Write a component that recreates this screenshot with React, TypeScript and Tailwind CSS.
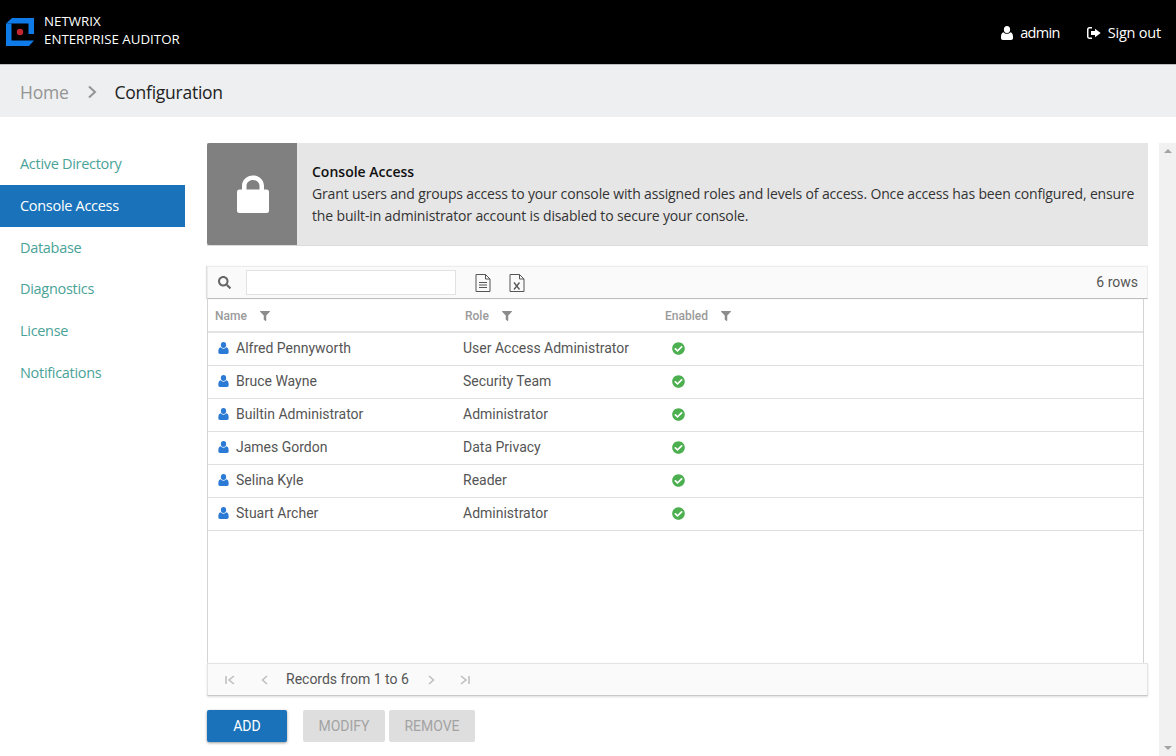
import { FaCheckCircle, FaFilter, FaSearch } from "react-icons/fa"

const segoe = "font-['Open_Sans',sans-serif]"

const navItems = ["Active Directory", "Console Access", "Database", "Diagnostics", "License", "Notifications"]

const rows = [
  { name: "Alfred Pennyworth", role: "User Access Administrator" },
  { name: "Bruce Wayne", role: "Security Team" },
  { name: "Builtin Administrator", role: "Administrator" },
  { name: "James Gordon", role: "Data Privacy" },
  { name: "Selina Kyle", role: "Reader" },
  { name: "Stuart Archer", role: "Administrator" },
]

function Logo() {
  return (
    <svg width="28" height="28" viewBox="0 0 28 28" className="shrink-0">
      <path d="M0 5.500 6 0H28V16H22.500V5.500H0Z" fill="#0f7be8" />
      <path d="M0 5.500H5.500V22.500H28L23 28H0Z" fill="#0f7be8" />
      <circle cx="14" cy="14" r="3.200" fill="#c4262e" />
    </svg>
  )
}

function UserIcon({ className }: { className?: string }) {
  return (
    <svg viewBox="0 0 12 14" className={className} fill="currentColor">
      <ellipse cx="6" cy="3.600" rx="3.100" ry="3.500" />
      <path d="M2.600 6.200C3.400 7.200 4.600 7.800 6 7.800s2.600-.6 3.400-1.600c1.700.3 2.600 1.900 2.600 4.600v1.200c0 1.200-.8 2-1.900 2H1.900C.8 14 0 13.200 0 12v-1.200c0-2.700.9-4.300 2.600-4.600z" />
    </svg>
  )
}

function SignOutIcon() {
  return (
    <svg viewBox="0 0 14 12" className="h-[12px] w-[14px]" fill="currentColor">
      <path d="M5 0v1.500H2.500c-.6 0-1 .4-1 1v7c0 .6.400 1 1 1H5V12H2.500C1.100 12 0 10.900 0 9.500v-7C0 1.100 1.100 0 2.500 0z" />
      <path d="M8 1.800 13.700 6 8 10.200V8H4V4h4z" />
    </svg>
  )
}

function LockIcon() {
  return (
    <svg viewBox="0 0 32 38" className="ml-[2px] h-[38px] w-[32px]" fill="white">
      <path d="M5 15V11C5 5 10 .5 16 .5S27 5 27 11v4h-4.500v-4c0-3.500-3-6-6.500-6s-6.500 2.500-6.500 6v4z" />
      <rect x="0" y="14.500" width="32" height="23.500" rx="2.500" />
    </svg>
  )
}

function FileIcon({ x }: { x?: boolean }) {
  return (
    <svg viewBox="0 0 16 18" className="h-[18px] w-[16px]" fill="none" stroke="#555" strokeWidth="1">
      <path d="M1 .5H10.500L15 5V17.500H1Z" />
      <path d="M10.500 .5V5H15" />
      {x ? (
        <path d="M5 8.500 10.500 15.500M10.500 8.500 5 15.500" strokeWidth="1.300" />
      ) : (
        <path d="M4 8.500H12M4 11H12M4 13.500H12" />
      )}
    </svg>
  )
}

function PagerIcon({ d }: { d: string }) {
  return (
    <svg viewBox="0 0 12 12" className="h-[12px] w-[12px]" fill="none" stroke="#bdbdbd" strokeWidth="1.500">
      <path d={d} />
    </svg>
  )
}

function HeaderCell({ label, className }: { label: string; className: string }) {
  return (
    <div className={`flex items-center pt-[1px] ${className}`}>
      <span className="text-[12px] font-medium text-[#9a9a9a]">{label}</span>
      <FaFilter className="ml-[13px] h-[10px] w-[10px] text-[#8c8c8c]" />
    </div>
  )
}

export default function App() {
  return (
    <div className="flex h-[756px] w-[1176px] flex-col overflow-hidden bg-white font-['Roboto',sans-serif]">
      <header className={`flex h-[65px] shrink-0 items-center justify-between border-b border-[#bdbdbd] bg-black pl-[6px] pr-[15px] text-white ${segoe}`}>
        <div className="flex items-center gap-[10px]">
          <Logo />
          <div className="-mt-[4px] text-[13.300px] leading-[18px]">
            <div>NETWRIX</div>
            <div>ENTERPRISE AUDITOR</div>
          </div>
        </div>
        <div className="flex items-center pt-[1px] text-[14.500px] tracking-[-0.2px]">
          <UserIcon className="h-[14px] w-[12px]" />
          <span className="ml-[7px] tracking-[-0.7px]">admin</span>
          <span className="ml-[27px]"><SignOutIcon /></span>
          <span className="ml-[7px]">Sign out</span>
        </div>
      </header>

      <div className={`flex h-[52px] shrink-0 items-center bg-[#eeeff0] pl-[20px] pt-[2px] text-[17.500px] tracking-[-0.25px] ${segoe}`}>
        <span className="text-[#949494]">Home</span>
        <svg viewBox="0 0 10 14" className="ml-[19px] h-[14px] w-[10px]" fill="none" stroke="#949494" strokeWidth="2">
          <path d="M2 1.500 8 7 2 12.500" />
        </svg>
        <span className="ml-[17px] text-[#222]">Configuration</span>
      </div>

      <div className="flex min-h-0 flex-1">
        <nav className={`w-[185px] shrink-0 pt-[26px] text-[14.500px] tracking-[-0.3px] ${segoe}`}>
          {navItems.map((item) => (
            <div
              key={item}
              className={`flex h-[41.750px] items-center pl-[20px] ${
                item === "Console Access" ? "bg-[#1a73ba] text-white" : "text-[#4aa398]"
              }`}
            >
              {item}
            </div>
          ))}
        </nav>

        <main className="ml-[22px] flex w-[941px] shrink-0 flex-col pt-[26px]">
          <section className={`flex h-[103px] shrink-0 border-b border-[#dcdcdc] bg-[#e6e6e6] ${segoe}`}>
            <div className="flex w-[90px] shrink-0 items-center justify-center rounded-l-[2px] bg-[#808080]">
              <LockIcon />
            </div>
            <div className="pl-[15px] pr-[8px] pt-[18px] text-[14px] leading-[22px] tracking-[-0.15px] text-[#333]">
              <div className="font-semibold tracking-[0px] text-[#111]">Console Access</div>
              <div>
                Grant users and groups access to your console with assigned roles and levels of access. Once access has been configured, ensure the built-in administrator account is disabled to secure your console.
              </div>
            </div>
          </section>

          <div className="mt-[20px] flex h-[33px] shrink-0 items-center border border-[#ececec] border-b-[#bdbdbd] bg-[#fafafa] pl-[10px] pr-[9px] shadow-[-1px_0_1px_#e0e0e0]">
            <FaSearch className="h-[13px] w-[13px] text-[#666]" />
            <div className="ml-[15px] h-[25px] w-[210px] border border-[#e2e2e2] bg-white" />
            <span className="ml-[19px] flex"><FileIcon /></span>
            <span className="ml-[18px] flex"><FileIcon x /></span>
            <span className="ml-auto text-[14px] text-[#555]">6 rows</span>
          </div>

          <div className="flex h-[364px] w-[937px] shrink-0 flex-col border-x border-[#d4d4d4]">
            <div className="flex h-[34px] shrink-0 items-center border-b-2 border-[#e3e3e3]">
              <HeaderCell label="Name" className="w-[250px] pl-[7px]" />
              <HeaderCell label="Role" className="w-[200px] pl-[7px]" />
              <HeaderCell label="Enabled" className="pl-[7px]" />
            </div>
            {rows.map((row) => (
              <div key={row.name} className="flex h-[33px] shrink-0 items-center border-b border-[#e0e0e0] pb-[2px] text-[14px] text-[#555]">
                <div className="flex w-[255px] items-center pl-[10px]">
                  <UserIcon className="h-[12px] w-[11px] text-[#2a7ad6]" />
                  <span className="ml-[7px]">{row.name}</span>
                </div>
                <div className="w-[209px]">{row.role}</div>
                <div className="flex">
                  <FaCheckCircle className="h-[13px] w-[13px] text-[#4caf50]" />
                </div>
              </div>
            ))}
          </div>

          <div className="flex h-[33px] shrink-0 items-center border border-[#e4e4e4] border-b-[#c8c8c8] bg-[#fafafa] pl-[16px] shadow-[0_1px_2px_#ddd]">
            <PagerIcon d="M2 2V10M10 2 5 6 10 10" />
            <span className="ml-[23px] flex"><PagerIcon d="M8 2 3.500 6 8 10" /></span>
            <span className="ml-[15px] text-[14px] text-[#555]">Records from 1 to 6</span>
            <span className="ml-[16px] flex"><PagerIcon d="M4 2 8.500 6 4 10" /></span>
            <span className="ml-[22px] flex"><PagerIcon d="M2 2 7 6 2 10M10 2V10" /></span>
          </div>

          <div className="mt-[14px] flex shrink-0 text-[14px]">
            <button className="h-[32px] w-[80px] rounded-[2px] bg-[#1a73ba] text-white shadow-[0_1px_3px_rgba(0,0,0,0.4)]">ADD</button>
            <button className="ml-[16px] h-[32px] w-[82px] rounded-[2px] bg-[#dedede] text-[#a3a3a3]">MODIFY</button>
            <button className="ml-[4px] h-[32px] w-[86px] rounded-[2px] bg-[#dedede] text-[#a3a3a3]">REMOVE</button>
          </div>
        </main>

        <div className="ml-[11px] mt-[26px] flex w-[17px] shrink-0 flex-col items-center justify-between bg-[#f1f1f1] py-[6px]">
          <svg viewBox="0 0 8 4" className="h-[4px] w-[8px]" fill="#a3a3a3"><path d="M4 0 8 4H0Z" /></svg>
          <svg viewBox="0 0 8 4" className="h-[4px] w-[8px]" fill="#a3a3a3"><path d="M0 0H8L4 4Z" /></svg>
        </div>
      </div>
    </div>
  )
}
